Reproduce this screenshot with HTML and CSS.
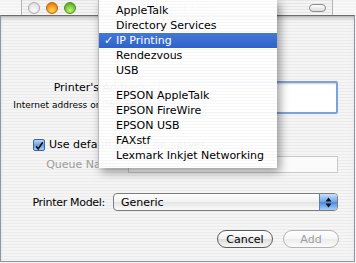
FILE: index.html
```html
<!DOCTYPE html>
<html>
<head>
  <title>Printer List</title>
  <link rel="stylesheet" href="styles.css">
</head>
<body>
  <div class="screen">
    <div class="titlebar">
      <span class="light light-gray"></span>
      <span class="light light-orange"></span>
      <span class="light light-green"></span>
      <span class="title">Printer List</span>
      <span class="toolbar-pill"></span>
    </div>

    <div class="sheet">
      <div class="row addr-row">
        <div class="addr-labels">
          <div class="label">Printer's Address:</div>
          <div class="hint">Internet address or DNS name</div>
        </div>
        <div class="field field-focus"></div>
      </div>

      <div class="row check-row">
        <span class="checkbox">
          <svg width="12" height="12" viewBox="0 0 12 12">
            <path d="M2.5 6.2 L5 9.5 L10.5 1.5" fill="none" stroke="#111" stroke-width="2"/>
          </svg>
        </span>
        <span class="label">Use default queue on server</span>
      </div>

      <div class="row queue-row">
        <div class="label disabled queue-label">Queue Name:</div>
        <div class="field field-disabled"></div>
      </div>

      <div class="row model-row">
        <div class="label model-label">Printer Model:</div>
        <div class="popup">
          <span class="popup-text">Generic</span>
          <span class="popup-arrows">
            <svg width="7" height="11" viewBox="0 0 7 11">
              <path d="M3.5 0.5 L6.5 4.5 L0.5 4.5 Z M3.5 10.5 L6.5 6.5 L0.5 6.5 Z" fill="#111"/>
            </svg>
          </span>
        </div>
      </div>

      <div class="row button-row">
        <button class="button">Cancel</button>
        <button class="button button-disabled">Add</button>
      </div>
    </div>

    <div class="menu">
      <div class="item">AppleTalk</div>
      <div class="item">Directory Services</div>
      <div class="item selected"><span class="check">&#10003;</span>IP Printing</div>
      <div class="item">Rendezvous</div>
      <div class="item">USB</div>
      <div class="separator"></div>
      <div class="item">EPSON AppleTalk</div>
      <div class="item">EPSON FireWire</div>
      <div class="item">EPSON USB</div>
      <div class="item">FAXstf</div>
      <div class="item">Lexmark Inkjet Networking</div>
    </div>
  </div>
</body>
</html>
```

FILE: styles.css
```css
body {
  margin: 0;
  font-family: "DejaVu Sans", Verdana, sans-serif;
  font-size: 11px;
  color: #000;
  background-color: #fff;
}

.screen {
  position: relative;
  width: 356px;
  height: 263px;
  overflow: hidden;
  background: repeating-linear-gradient(#f3f3f3 0 2px, #fafafa 2px 3px);
}

/* window title bar behind the sheet */
.titlebar {
  display: flex;
  align-items: center;
  margin-left: 21px;
  width: 312px;
  height: 15px;
  padding: 0 0 0 6px;
  box-sizing: border-box;
  border-left: 1px solid #b4b4b4;
  border-right: 1px solid #b4b4b4;
  background: repeating-linear-gradient(#e6e6e6 0 1px, #f4f4f4 1px 3px);
}

.light {
  width: 12px;
  height: 12px;
  border-radius: 50%;
  margin-right: 6px;
  box-sizing: border-box;
}

.light-gray {
  border: 1px solid #a8a8a8;
  background: radial-gradient(circle at 50% 70%, #fafafa, #d8d8d8);
}

.light-orange {
  border: 1px solid #b8650a;
  background: radial-gradient(circle at 50% 75%, #ffd35a 0, #f39a1a 55%, #c96a0a 100%);
}

.light-green {
  border: 1px solid #4f8a1f;
  background: radial-gradient(circle at 50% 75%, #c6f07a 0, #7cc63a 55%, #4a9418 100%);
}

.title {
  flex: 1;
  text-align: center;
  color: #9a9a9a;
  font-size: 11px;
  margin-right: 30px;
}

.toolbar-pill {
  width: 17px;
  height: 8px;
  margin-right: 6px;
  border: 1px solid #8c8c8c;
  border-radius: 5px;
  background: linear-gradient(#fff, #dcdcdc);
  box-sizing: border-box;
}

/* the sheet */
.sheet {
  width: 355px;
  height: 247px;
  box-sizing: border-box;
  border: 1px solid #8f96a3;
  border-top-color: #6c6c6c;
  background: repeating-linear-gradient(#ebebeb 0 1px, #f5f5f5 1px 3px);
  box-shadow: inset 0 4px 5px -3px rgba(0, 0, 0, 0.35);
}

.row {
  display: flex;
}

.label {
  line-height: 13px;
  white-space: nowrap;
}

.disabled {
  color: #9c9c9c;
}

.addr-row {
  margin-top: 65px;
}

.addr-labels {
  width: 149px;
  text-align: right;
}

.hint {
  margin-top: 6px;
  font-size: 9px;
  line-height: 11px;
  white-space: nowrap;
}

.field {
  background-color: #fff;
  box-sizing: border-box;
}

.field-focus {
  margin-left: 8px;
  width: 180px;
  height: 33px;
  border: 2px solid #7ba2dc;
  border-radius: 2px;
  box-shadow: inset 1px 1px 2px rgba(0, 0, 0, 0.2);
}

.check-row {
  margin-top: 24px;
  padding-left: 32px;
  align-items: center;
}

.checkbox {
  display: flex;
  width: 12px;
  height: 12px;
  margin-right: 4px;
  box-sizing: border-box;
  border: 1px solid #3d63a6;
  border-radius: 2px;
  background: linear-gradient(#bcd7f7, #6d9fe3 50%, #a9cdf7);
}

.queue-row {
  margin-top: 5px;
}

.queue-label {
  width: 121px;
  text-align: right;
  line-height: 17px;
}

.field-disabled {
  margin-left: 6px;
  width: 210px;
  height: 17px;
  border: 1px solid #c8c8c8;
  background-color: #fbfbfb;
}

.model-row {
  margin-top: 20px;
  align-items: center;
}

.model-label {
  width: 104px;
  text-align: right;
  letter-spacing: -0.3px;
}

.popup {
  display: flex;
  align-items: center;
  margin-left: 8px;
  width: 225px;
  height: 18px;
  box-sizing: border-box;
  border: 1px solid #7c7c7c;
  border-radius: 4px;
  background: linear-gradient(#ffffff, #f1f1f1 50%, #e4e4e4 51%, #fafafa);
  overflow: hidden;
}

.popup-text {
  flex: 1;
  padding-left: 7px;
}

.popup-arrows {
  display: flex;
  align-items: center;
  justify-content: center;
  width: 17px;
  height: 100%;
  border-left: 1px solid #5a7fb8;
  background: linear-gradient(#c9e0fb, #6ea3ea 50%, #4b88e0 51%, #a7cff8);
}

.button-row {
  margin-top: 19px;
  justify-content: flex-end;
  padding-right: 15px;
}

.button {
  width: 56px;
  height: 18px;
  margin-left: 10px;
  padding: 0;
  font-family: "DejaVu Sans", Verdana, sans-serif;
  font-size: 11px;
  color: #000;
  border: 1px solid #5c5c5c;
  border-radius: 9px;
  background: linear-gradient(#ffffff, #f0f0f0 50%, #dcdcdc 51%, #f6f6f6);
}

.button-disabled {
  color: #9e9e9e;
  border-color: #b4b4b4;
  background: linear-gradient(#ffffff, #f6f6f6 50%, #ececec 51%, #fbfbfb);
}

/* popup menu lying over the sheet */
.menu {
  position: absolute;
  left: 98px;
  top: -1px;
  width: 178px;
  padding: 4px 0 5px;
  border-left: 1px solid #b9b9b9;
  background: repeating-linear-gradient(rgba(255, 255, 255, 0.96) 0 2px, rgba(247, 247, 247, 0.96) 2px 3px);
  box-shadow: 3px 4px 9px rgba(0, 0, 0, 0.4);
}

.item {
  position: relative;
  height: 15px;
  line-height: 15px;
  padding-left: 17px;
  white-space: nowrap;
}

.selected {
  color: #fff;
  background: linear-gradient(#4478d8, #2f62c9);
}

.check {
  position: absolute;
  left: 5px;
  font-size: 11px;
  font-weight: bold;
}

.separator {
  height: 10px;
}
```
